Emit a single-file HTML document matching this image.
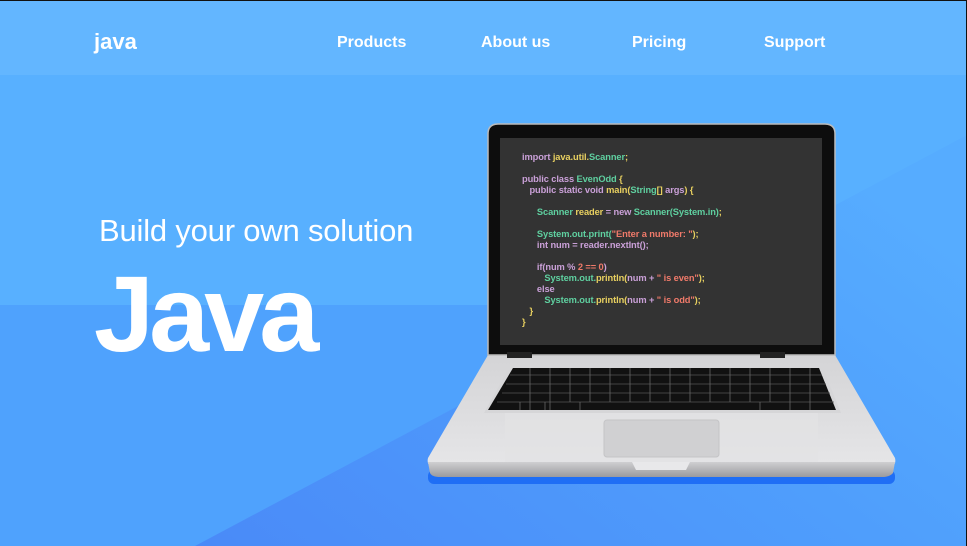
<!DOCTYPE html>
<html><head><meta charset="utf-8"><style>
*{margin:0;padding:0;box-sizing:border-box}
body{width:967px;height:546px;overflow:hidden;position:relative;background:#58b0ff;font-family:"Liberation Sans",sans-serif}
.abs{position:absolute}
.nav{left:0;top:0;width:967px;height:75px;background:#63b6ff;border-top:1px solid #111}
.nav span{position:absolute;color:#fff;font-weight:bold;font-size:16px;top:33px}
.code{left:522px;top:152px;font-size:9.3px;line-height:11px;color:#c8a2c8;white-space:pre;font-family:"Liberation Sans",sans-serif;letter-spacing:-0.1px;font-weight:bold}
.g{color:#5fd0a0}.y{color:#e8d060}.r{color:#f07a6a}.p{color:#caa0d8}
</style></head><body>
<svg class="abs" style="left:0;top:0" width="967" height="546">
<defs><linearGradient id="dk" x1="0" y1="1" x2="1" y2="0.3"><stop offset="0" stop-color="#4a8af8"/><stop offset="0.6" stop-color="#4f9efc"/><stop offset="1" stop-color="#56acff"/></linearGradient></defs>
<rect x="0" y="305" width="967" height="241" fill="#4fa2fd"/>
<polygon points="967,135 195,546 967,546" fill="url(#dk)"/>
</svg>
<div class="abs nav">
<span style="left:94px;top:28px;font-size:22px">java</span>
<span style="left:337px">Products</span>
<span style="left:481px">About us</span>
<span style="left:632px">Pricing</span>
<span style="left:764px">Support</span>
</div>
<div class="abs" style="left:99px;top:213px;color:#fff;font-size:31px;letter-spacing:-0.2px">Build your own solution</div>
<div class="abs" style="left:94px;top:258px;color:#fff;font-size:108px;font-weight:bold;letter-spacing:-5px;line-height:112px">Java</div>
<svg class="abs" style="left:0;top:0" width="967" height="546">
<defs>
<linearGradient id="base" x1="0" y1="0" x2="0" y2="1"><stop offset="0" stop-color="#d4d4d6"/><stop offset="1" stop-color="#e6e6e8"/></linearGradient>
<linearGradient id="edge" x1="0" y1="0" x2="0" y2="1"><stop offset="0" stop-color="#cfcfd1"/><stop offset="1" stop-color="#9a9a9e"/></linearGradient>
</defs>
<rect x="428" y="470" width="467" height="14" rx="6" fill="#1f6ef5"/>
<path d="M488,355 L835,355 L895,458 Q897,466 888,468 L435,468 Q426,466 428,458 Z" fill="url(#base)"/>
<path d="M428,462 L895,462 L893,473 Q890,477 882,477 L440,477 Q432,477 430,473 Z" fill="url(#edge)"/>
<rect x="505" y="412" width="313" height="50" fill="#e2e2e4" opacity="0.7"/>
<path d="M510,366 L822,366 L841,413 L484,413 Z" fill="#d6d6d8"/>
<path d="M513,368 L819,368 L836,410 L488,410 Z" fill="#111"/>
<g stroke="#555" stroke-width="0.8">
<line x1="510" y1="375" x2="822" y2="375"/><line x1="506" y1="384" x2="826" y2="384"/><line x1="502" y1="393" x2="830" y2="393"/><line x1="497" y1="402" x2="834" y2="402"/>
</g>
<g stroke="#666" stroke-width="0.8">
<path d="M530,368v42M550,368v42M570,368v34M590,368v34M610,368v34M630,368v34M650,368v34M670,368v34M690,368v34M710,368v34M730,368v34M750,368v34M770,368v34M790,368v42M810,368v42M580,402v8M760,402v8M520,402v8M545,402v8"/>
</g>
<rect x="604" y="420" width="115" height="37" rx="3" fill="#d0d0d2" stroke="#c4c4c6"/>
<path d="M632,462 L690,462 L686,470 L636,470 Z" fill="#e8e8ea"/>
<path d="M498,124 L825,124 Q835,124 835,134 L835,355 L488,355 L488,134 Q488,124 498,124 Z" fill="#0d0d0d" stroke="#bbb" stroke-width="1.5"/>
<rect x="500" y="138" width="322" height="207" fill="#333"/>
<rect x="507" y="352" width="25" height="6" fill="#222"/><rect x="760" y="352" width="25" height="6" fill="#222"/>
</svg>
<div class="abs code"><span class="p">import </span><span class="y">java.util.</span><span class="g">Scanner</span><span class="y">;</span>

<span class="p">public class </span><span class="g">EvenOdd</span><span class="y"> {</span>
<span class="p">   public static void </span><span class="y">main(</span><span class="g">String</span><span class="y">[] </span><span class="p">args</span><span class="y">) {</span>

<span class="g">      Scanner </span><span class="y">reader</span><span class="p"> = new </span><span class="g">Scanner(System.in)</span><span class="y">;</span>

<span class="g">      System.out.print(</span><span class="r">"Enter a number: "</span><span class="y">);</span>
<span class="p">      int num = reader.nextInt();</span>

<span class="p">      if(num % </span><span class="r">2 == 0</span><span class="p">)</span>
<span class="g">         System.out.</span><span class="y">println(</span><span class="p">num + </span><span class="r">" is even"</span><span class="y">);</span>
<span class="p">      else</span>
<span class="g">         System.out.</span><span class="y">println(</span><span class="p">num + </span><span class="r">" is odd"</span><span class="y">);</span>
<span class="y">   }</span>
<span class="y">}</span></div>
<div class="abs" style="right:0;top:0;width:1px;height:546px;background:#111"></div>
</body></html>
